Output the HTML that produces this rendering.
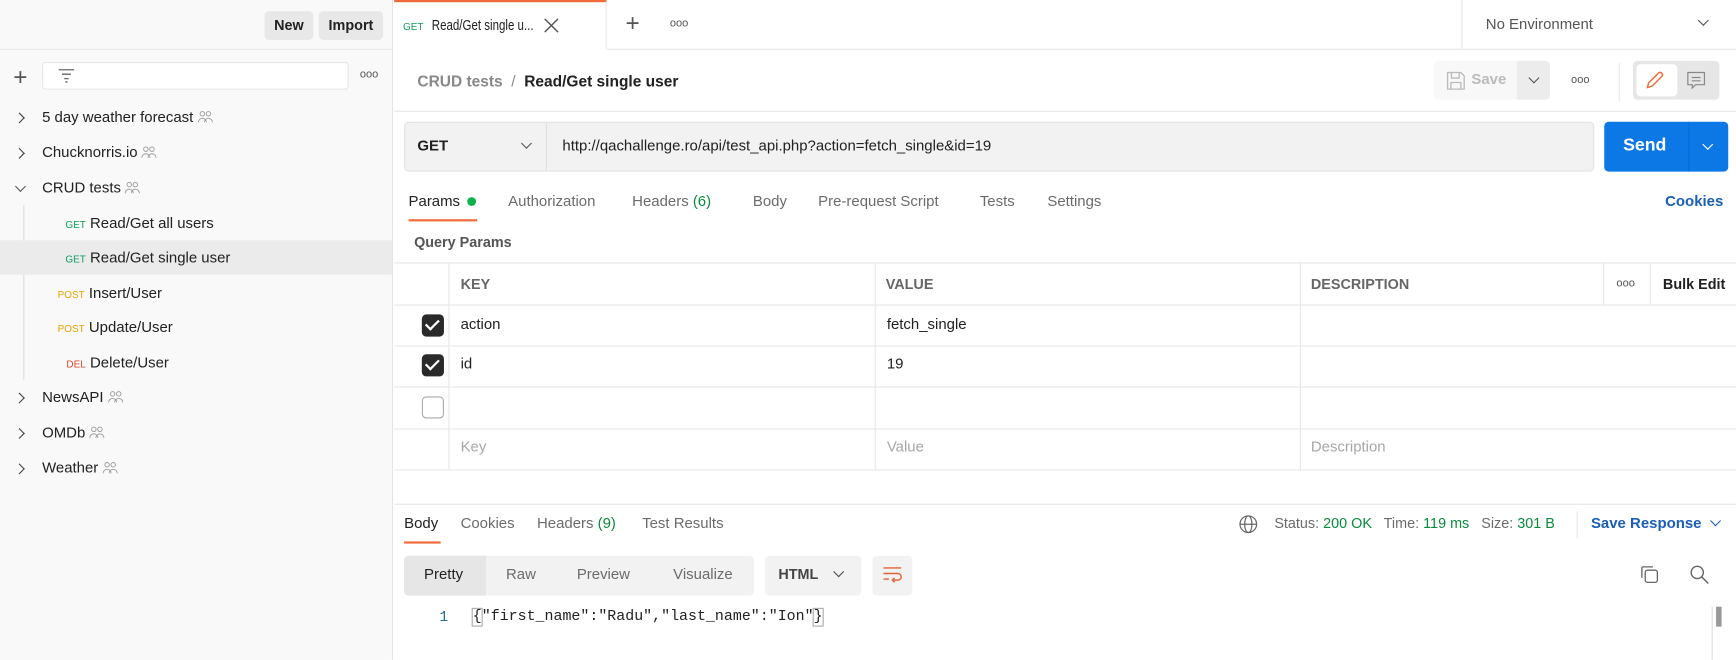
<!DOCTYPE html>
<html><head><meta charset="utf-8"><style>
*{box-sizing:border-box;margin:0;padding:0}
html,body{width:1736px;height:660px;overflow:hidden;background:#fff}
#w{position:absolute;left:0;top:0;width:1568px;height:596px;transform:scale(1.10714);transform-origin:0 0;font-family:"Liberation Sans",sans-serif;font-size:13.5px;color:#212121}
.a{position:absolute;white-space:nowrap}
.g{color:#6b6b6b}
.btn{position:absolute;background:#e8e8e8;border-radius:4px;font-weight:bold;font-size:13px;text-align:center;line-height:26px}
.hl{position:absolute;height:1px;background:#e6e6e6}
.vl{position:absolute;width:1px;background:#e6e6e6}
.chev{position:absolute;width:7px;height:7px;border-right:1.3px solid #555;border-bottom:1.3px solid #555;transform:rotate(45deg)}
.chr{position:absolute;width:7px;height:7px;border-right:1.3px solid #444;border-bottom:1.3px solid #444;transform:rotate(-45deg)}
.m{font-size:9px;position:absolute}
.cb{position:absolute;width:20px;height:20px;border-radius:4px;background:#2a2a2a;left:381px}
.cb:after{content:"";position:absolute;left:6px;top:2px;width:5px;height:10px;border-right:2.5px solid #fff;border-bottom:2.5px solid #fff;transform:rotate(45deg)}
.dots{position:absolute;font-size:10px;color:#555}
.pp{display:inline-block;vertical-align:-1px;margin-left:3px}
</style></head><body><div id="w">
<svg width="0" height="0" style="position:absolute"><defs><symbol id="ppl" viewBox="0 0 16 12"><g fill="none" stroke="#999" stroke-width="0.9"><circle cx="5" cy="3" r="2.2"/><circle cx="11" cy="3" r="2.2"/><path d="M1 11.5a4 4 0 0 1 8 0M7 11.5a4 4 0 0 1 8 0"/></g></symbol></defs></svg>
<!-- sidebar -->
<div class="a" style="left:0;top:0;width:355px;height:596px;background:#f9f9f9;border-right:1px solid #e3e3e3"></div>
<div class="btn" style="left:239px;top:10px;width:44px">New</div>
<div class="btn" style="left:288px;top:10px;width:58px">Import</div>
<div class="hl" style="left:0;top:44px;width:355px"></div>
<div class="a" style="left:12px;top:57px;font-size:22px;color:#555;font-weight:300">+</div>
<div class="a" style="left:38px;top:56px;width:277px;height:25px;background:#fff;border:1px solid #e6e6e6;border-radius:3px"></div>
<svg class="a" style="left:52px;top:61px" width="16" height="14"><path d="M1 2h14M4 6h8M6 10h4M7 13h2" stroke="#666" stroke-width="1.2"/></svg>
<div class="dots" style="left:325px;top:62px">ooo</div>
<div class="chr" style="left:14px;top:103px"></div><div class="a" style="left:38px;top:98px">5 day weather forecast<svg class="pp" width="15" height="11"><use href="#ppl"/></svg></div>
<div class="chr" style="left:14px;top:135px"></div><div class="a" style="left:38px;top:130px">Chucknorris.io<svg class="pp" width="15" height="11"><use href="#ppl"/></svg></div>
<div class="chev" style="left:15px;top:165px"></div><div class="a" style="left:38px;top:162px">CRUD tests<svg class="pp" width="15" height="11"><use href="#ppl"/></svg></div>
<div class="vl" style="left:21px;top:185px;height:158px;background:#ddd"></div>
<div class="a" style="left:0;top:217px;width:354px;height:31px;background:#ebebeb"></div>
<div class="a" style="left:59px;top:194px"><span class="m" style="position:static;color:#0f9d58">GET</span> Read/Get all users</div>
<div class="a" style="left:59px;top:225px"><span class="m" style="position:static;color:#0f9d58">GET</span> Read/Get single user</div>
<div class="a" style="left:52px;top:257px"><span class="m" style="position:static;color:#e8a200">POST</span> Insert/User</div>
<div class="a" style="left:52px;top:288px"><span class="m" style="position:static;color:#e8a200">POST</span> Update/User</div>
<div class="a" style="left:60px;top:320px"><span class="m" style="position:static;color:#d9482b">DEL</span> Delete/User</div>
<div class="chr" style="left:14px;top:356px"></div><div class="a" style="left:38px;top:351px">NewsAPI<svg class="pp" width="15" height="11"><use href="#ppl"/></svg></div>
<div class="chr" style="left:14px;top:388px"></div><div class="a" style="left:38px;top:383px">OMDb<svg class="pp" width="15" height="11"><use href="#ppl"/></svg></div>
<div class="chr" style="left:14px;top:420px"></div><div class="a" style="left:38px;top:415px">Weather<svg class="pp" width="15" height="11"><use href="#ppl"/></svg></div>
<!-- top tab bar -->
<div class="a" style="left:356px;top:0;width:192px;height:44px;border-top:2px solid #f26b3a;border-right:1px solid #e6e6e6;background:#fff"></div>
<div class="a" style="left:364px;top:15px;font-size:13px"><span class="m" style="position:static;color:#0f9d58">GET</span>&nbsp; <span style="display:inline-block;transform:scaleX(0.8);transform-origin:0 0">Read/Get single u...</span></div>
<svg class="a" style="left:491px;top:16px" width="14" height="14"><path d="M1 1l12 12M13 1L1 13" stroke="#555" stroke-width="1.3"/></svg>
<div class="a" style="left:565px;top:8px;font-size:22px;color:#555">+</div>
<div class="dots" style="left:605px;top:16px">ooo</div>
<div class="hl" style="left:548px;top:44px;width:1020px"></div>
<div class="vl" style="left:1320px;top:0;height:44px"></div>
<div class="a g" style="left:1342px;top:14px;color:#555">No Environment</div>
<div class="chev" style="left:1535px;top:15px"></div>
<!-- breadcrumb -->
<div class="a" style="left:377px;top:65px;font-size:14px"><span style="color:#888;font-weight:bold">CRUD tests</span> <span style="color:#888">&nbsp;/&nbsp;</span> <b>Read/Get single user</b></div>
<div class="a" style="left:1295px;top:55px;width:75px;height:35px;background:#f8f8f8;border-radius:4px 0 0 4px"></div>
<svg class="a" style="left:1306px;top:64px" width="18" height="18"><path d="M1.5 1.5h12l3 3v12h-15z M5 1.5v5h7v-5 M4.5 16.5v-6h9v6" fill="none" stroke="#bbb" stroke-width="1.2"/></svg>
<div class="a" style="left:1329px;top:64px;font-weight:bold;color:#bbb">Save</div>
<div class="a" style="left:1370px;top:55px;width:30px;height:35px;background:#ececec;border-radius:0 4px 4px 0"></div>
<div class="chev" style="left:1382px;top:67px"></div>
<div class="dots" style="left:1419px;top:67px">ooo</div>
<div class="vl" style="left:1462px;top:57px;height:34px"></div>
<div class="a" style="left:1475px;top:55px;width:78px;height:35px;background:#e6e6e6;border-radius:4px"></div>
<div class="a" style="left:1478px;top:58px;width:37px;height:29px;background:#fff;border-radius:4px"></div>
<svg class="a" style="left:1486px;top:63px" width="18" height="18"><path d="M2 16l1-4 9-9a2 2 0 0 1 3 3l-9 9z" fill="none" stroke="#f26b3a" stroke-width="1.3"/></svg>
<svg class="a" style="left:1523px;top:64px" width="18" height="18"><path d="M1.5 1.5h15v11h-8l-3 3v-3h-4z M5 6h8M5 9h8" fill="none" stroke="#888" stroke-width="1.1"/></svg>
<div class="hl" style="left:356px;top:100px;width:1212px"></div>
<!-- url bar -->
<div class="a" style="left:365px;top:110px;width:1075px;height:45px;background:#f2f2f2;border:1px solid #e3e3e3;border-radius:4px"></div>
<div class="vl" style="left:493px;top:111px;height:43px;background:#e0e0e0"></div>
<div class="a" style="left:377px;top:124px;font-weight:bold">GET</div>
<div class="chev" style="left:472px;top:126px"></div>
<div class="a" style="left:508px;top:124px;font-size:13.5px">http://qachallenge.ro/api/test_api.php?action=fetch_single&amp;id=19</div>
<div class="a" style="left:1449px;top:110px;width:112px;height:45px;background:#0c78e6;border-radius:4px"></div>
<div class="vl" style="left:1525px;top:110px;height:45px;background:#0b69cc"></div>
<div class="a" style="left:1466px;top:123px;color:#fff;font-weight:bold;font-size:16px">Send</div>
<div class="chev" style="left:1539px;top:127px;border-color:#fff"></div>
<!-- request tabs -->
<div class="a" style="left:369px;top:174px">Params <span style="display:inline-block;width:8px;height:8px;border-radius:50%;background:#0fb14d;margin-left:3px"></span></div>
<div class="a" style="left:369px;top:198px;width:62px;height:2px;background:#f26b3a"></div>
<div class="a g" style="left:459px;top:174px">Authorization</div>
<div class="a g" style="left:571px;top:174px">Headers <span style="color:#0b8a3e">(6)</span></div>
<div class="a g" style="left:680px;top:174px">Body</div>
<div class="a g" style="left:739px;top:174px">Pre-request Script</div>
<div class="a g" style="left:885px;top:174px">Tests</div>
<div class="a g" style="left:946px;top:174px">Settings</div>
<div class="a" style="left:1504px;top:174px;color:#1a5fb4;font-weight:bold">Cookies</div>
<div class="a" style="left:374px;top:211px;font-weight:bold;font-size:13px;color:#555">Query Params</div>
<!-- table -->
<div class="hl" style="left:356px;top:237px;width:1212px"></div>
<div class="hl" style="left:356px;top:275px;width:1212px"></div>
<div class="hl" style="left:356px;top:312px;width:1212px"></div>
<div class="hl" style="left:356px;top:349px;width:1212px"></div>
<div class="hl" style="left:356px;top:387px;width:1212px"></div>
<div class="hl" style="left:356px;top:424px;width:1212px"></div>
<div class="vl" style="left:405px;top:237px;height:187px"></div>
<div class="vl" style="left:790px;top:237px;height:187px"></div>
<div class="vl" style="left:1174px;top:237px;height:187px"></div>
<div class="vl" style="left:1448px;top:237px;height:38px"></div>
<div class="vl" style="left:1490px;top:237px;height:38px"></div>
<div class="a" style="left:416px;top:249px;font-weight:bold;font-size:13px;color:#666">KEY</div>
<div class="a" style="left:800px;top:249px;font-weight:bold;font-size:13px;color:#666">VALUE</div>
<div class="a" style="left:1184px;top:249px;font-weight:bold;font-size:13px;color:#666">DESCRIPTION</div>
<div class="dots" style="left:1460px;top:251px">ooo</div>
<div class="a" style="left:1502px;top:249px;font-weight:bold;font-size:13px">Bulk Edit</div>
<div class="cb" style="top:284px"></div><div class="a" style="left:416px;top:285px">action</div><div class="a" style="left:801px;top:285px">fetch_single</div>
<div class="cb" style="top:320px"></div><div class="a" style="left:416px;top:321px">id</div><div class="a" style="left:801px;top:321px">19</div>
<div class="a" style="left:381px;top:358px;width:20px;height:20px;border:1px solid #aaa;border-radius:4px;background:#fff"></div>
<div class="a" style="left:416px;top:396px;color:#a6a6a6">Key</div>
<div class="a" style="left:801px;top:396px;color:#a6a6a6">Value</div>
<div class="a" style="left:1184px;top:396px;color:#a6a6a6">Description</div>
<!-- response -->
<div class="hl" style="left:356px;top:455px;width:1212px"></div>
<div class="a" style="left:365px;top:465px">Body</div>
<div class="a" style="left:365px;top:489px;width:33px;height:2px;background:#f26b3a"></div>
<div class="a g" style="left:416px;top:465px">Cookies</div>
<div class="a g" style="left:485px;top:465px">Headers <span style="color:#0b8a3e">(9)</span></div>
<div class="a g" style="left:580px;top:465px">Test Results</div>
<svg class="a" style="left:1119px;top:465px" width="17" height="17"><g fill="none" stroke="#666" stroke-width="1.1"><circle cx="8.5" cy="8.5" r="7.5"/><ellipse cx="8.5" cy="8.5" rx="3.3" ry="7.5"/><path d="M1 8.5h15"/></g></svg>
<div class="a g" style="left:1151px;top:465px;font-size:13px">Status: <span style="color:#0b8a3e">200 OK</span>&nbsp;&nbsp; Time: <span style="color:#0b8a3e">119 ms</span>&nbsp;&nbsp; Size: <span style="color:#0b8a3e">301 B</span></div>
<div class="vl" style="left:1424px;top:462px;height:24px"></div>
<div class="a" style="left:1437px;top:465px;color:#1a5fb4;font-weight:bold">Save Response</div>
<div class="chev" style="left:1546px;top:467px;border-color:#1a5fb4"></div>
<div class="a" style="left:365px;top:502px;width:316px;height:36px;background:#f2f2f2;border-radius:4px"></div>
<div class="a" style="left:365px;top:502px;width:74px;height:36px;background:#e6e6e6;border-radius:4px 0 0 4px"></div>
<div class="a" style="left:383px;top:511px">Pretty</div>
<div class="a g" style="left:457px;top:511px">Raw</div>
<div class="a g" style="left:521px;top:511px">Preview</div>
<div class="a g" style="left:608px;top:511px">Visualize</div>
<div class="a" style="left:691px;top:502px;width:87px;height:36px;background:#f2f2f2;border-radius:4px"></div>
<div class="a" style="left:703px;top:511px;font-weight:bold;font-size:13px;color:#444">HTML</div>
<div class="chev" style="left:754px;top:513px"></div>
<div class="a" style="left:788px;top:502px;width:36px;height:36px;background:#f2f2f2;border-radius:4px"></div>
<svg class="a" style="left:797px;top:511px" width="18" height="16"><g fill="none" stroke="#e0643a" stroke-width="1.3"><path d="M1 2h16M1 7h13a3 3 0 0 1 0 6h-5M11 11l-2 2 2 2M1 12h5"/></g></svg>
<svg class="a" style="left:1481px;top:510px" width="18" height="18"><g fill="none" stroke="#666" stroke-width="1.2"><rect x="5" y="5" width="11" height="11" rx="2"/><path d="M2 12V3a1 1 0 0 1 1-1h9"/></g></svg>
<svg class="a" style="left:1526px;top:510px" width="18" height="18"><g fill="none" stroke="#666" stroke-width="1.3"><circle cx="7" cy="7" r="5.5"/><path d="M11 11l6 6"/></g></svg>
<div class="a" style="left:397px;top:550px;font-family:'Liberation Mono',monospace;font-size:13px;color:#1c6b8a">1</div>
<div class="a" style="left:427px;top:550px;font-family:'Liberation Mono',monospace;font-size:13.5px;color:#222"><span style="outline:1px solid #aaa">{</span>"first_name":"Radu","last_name":"Ion"<span style="outline:1px solid #aaa">}</span></div>
<div class="vl" style="left:1546px;top:548px;height:48px;background:#ddd"></div>
<div class="a" style="left:1550px;top:548px;width:5px;height:18px;background:#999"></div>
</div></body></html>
